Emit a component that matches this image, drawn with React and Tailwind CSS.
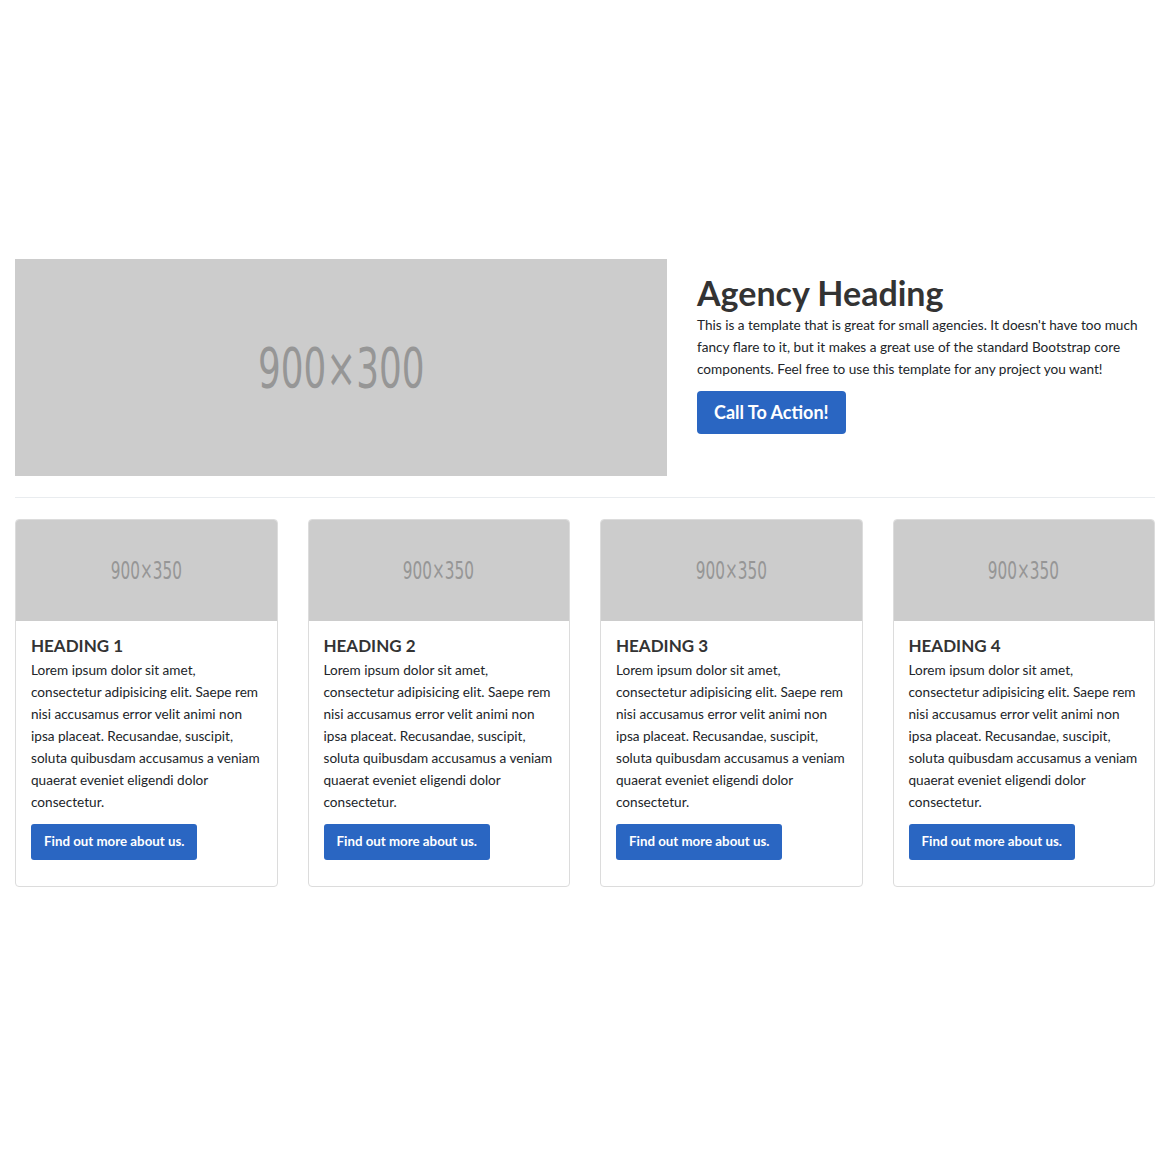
const font = { fontFamily: '"Lato", "Liberation Sans", sans-serif' };

const cards = [1, 2, 3, 4].map((n) => ({
	title: `Heading ${n}`,
	text: "Lorem ipsum dolor sit amet, consectetur adipisicing elit. Saepe rem nisi accusamus error velit animi non ipsa placeat. Recusandae, suscipit, soluta quibusdam accusamus a veniam quaerat eveniet eligendi dolor consectetur.",
}));

const Placeholder = ({ label, className, textClass }) => (
	<div className={`flex items-center justify-center bg-[#cccccc] ${className}`}>
		<span className={`text-[#969696] [font-family:'DejaVu_Sans_Condensed','DejaVu_Sans',sans-serif] ${textClass}`}>
			{label}
		</span>
	</div>
);

export default function App() {
	return (
		<div className="min-h-[1170px] bg-white text-[#212529]" style={font}>
			<div className="mx-auto w-[1170px] px-[15px] pt-[259px]">
				{/* HERO */}
				<div className="flex">
					<div className="w-[652px] shrink-0">
						<Placeholder label="900×300" className="h-[217px]" textClass="text-[56px] scale-x-[0.71]" />
					</div>
					<div className="ml-[30px] flex-1">
						<h1 className="mt-[14px] text-[34px] font-bold leading-[1.2] text-[#333]">Agency Heading</h1>
						<p className="mt-0 text-[13.6px] leading-[22px]">
							This is a template that is great for small agencies. It doesn't have too much fancy flare to it, but it makes a great use of the standard Bootstrap core components. Feel free to use this template for any project you want!
						</p>
						<button className="mt-[11px] h-[43px] rounded-[4px] bg-[#2a66c2] px-[17px] text-[18px] font-bold text-white">
							Call To Action!
						</button>
					</div>
				</div>

				<hr className="my-[21px] border-t border-[#e9ecef]" />

				{/* CARDS */}
				<div className="grid grid-cols-4 gap-[30px]">
					{cards.map((c) => (
						<div key={c.title} className="flex flex-col overflow-hidden rounded-[4px] border border-[#dcdcdc]">
							<Placeholder label="900×350" className="h-[101px]" textClass="text-[25px] scale-x-[0.68]" />
							<div className="px-[15px] pt-[14px] pb-[26px]">
								<h2 className="text-[17px] font-bold uppercase leading-[1.35] text-[#333]">{c.title}</h2>
								<p className="mt-[1px] text-[13.6px] leading-[22px]">{c.text}</p>
								<button className="mt-[11px] h-[36px] rounded-[3px] bg-[#2a66c2] px-[13px] text-[13.3px] font-bold text-white">
									Find out more about us.
								</button>
							</div>
						</div>
					))}
				</div>
			</div>
		</div>
	);
}
